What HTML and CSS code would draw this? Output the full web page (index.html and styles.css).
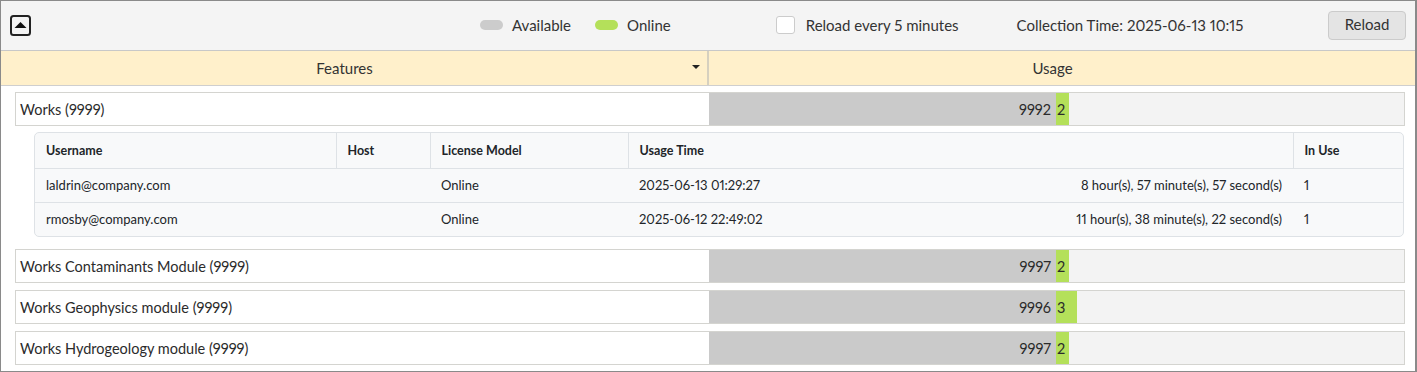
FILE: index.html
```html
<!DOCTYPE html>
<html>
<head>
<meta charset="utf-8">
<link rel="stylesheet" href="styles.css">
</head>
<body>
<div class="app">
  <div class="toolbar">
    <button class="collapse" aria-label="Collapse">
      <svg width="21" height="21" viewBox="0 0 21 21"><rect x="1" y="1" width="19" height="19" rx="2.5" fill="none" stroke="#222" stroke-width="2"/><path d="M4.5 13 L10.5 7 L16.5 13 Z" fill="#111"/></svg>
    </button>
    <div class="legend">
      <span class="pill pill-avail"></span><span class="legend-label">Available</span>
      <span class="pill pill-online"></span><span class="legend-label">Online</span>
    </div>
    <label class="auto"><span class="checkbox"></span><span>Reload every 5 minutes</span></label>
    <span class="time">Collection Time: 2025-06-13 10:15</span>
    <button class="reload">Reload</button>
  </div>
  <div class="head">
    <div class="hcol hcol-features">Features<span class="caret"></span></div>
    <div class="hcol hcol-usage">Usage</div>
  </div>
  <div class="list">
    <div class="feature">
      <div class="fname">Works (9999)</div>
      <div class="usage"><div class="avail" style="width:347px">9992</div><div class="online" style="width:13px">2</div></div>
    </div>
    <div class="details">
      <table>
        <thead>
          <tr><th class="c-user">Username</th><th class="c-host">Host</th><th class="c-model">License Model</th><th class="c-time" colspan="2">Usage Time</th><th class="c-use">In Use</th></tr>
        </thead>
        <tbody>
          <tr><td>laldrin@company.com</td><td></td><td>Online</td><td class="start">2025-06-13 01:29:27</td><td class="dur">8 hour(s), 57 minute(s), 57 second(s)</td><td>1</td></tr>
          <tr><td>rmosby@company.com</td><td></td><td>Online</td><td class="start">2025-06-12 22:49:02</td><td class="dur">11 hour(s), 38 minute(s), 22 second(s)</td><td>1</td></tr>
        </tbody>
      </table>
    </div>
    <div class="feature">
      <div class="fname">Works Contaminants Module (9999)</div>
      <div class="usage"><div class="avail" style="width:347px">9997</div><div class="online" style="width:13px">2</div></div>
    </div>
    <div class="feature">
      <div class="fname">Works Geophysics module (9999)</div>
      <div class="usage"><div class="avail" style="width:347px">9996</div><div class="online" style="width:21px">3</div></div>
    </div>
    <div class="feature">
      <div class="fname">Works Hydrogeology module (9999)</div>
      <div class="usage"><div class="avail" style="width:347px">9997</div><div class="online" style="width:13px">2</div></div>
    </div>
  </div>
</div>
</body>
</html>
```
FILE: styles.css
```css
* { box-sizing: border-box; }
html, body { margin: 0; padding: 0; background: #fff; }
body {
  font-family: Lato, "Noto Sans", sans-serif;
  color: #333;
  font-size: 15px;
  font-variant-numeric: proportional-nums;
}

.app {
  width: 1417px;
  height: 372px;
  border: 1px solid #8a8a8a;
  border-right-width: 2px;
  overflow: hidden;
}

.toolbar {
  height: 50px;
  background: #f4f4f4;
  border-bottom: 1px solid #c8c8c8;
  display: flex;
  align-items: center;
  padding-left: 9px;
}
.collapse {
  width: 21px; height: 21px; padding: 0; margin: 0; border: 0; background: none;
  display: flex;
}
.legend { display: flex; align-items: center; margin-left: 449px; padding-bottom: 2px; }
.pill { width: 23px; height: 10px; border-radius: 5px; display: inline-block; }
.pill-avail { background: #cccccc; }
.pill-online { background: #b4e05a; margin-left: 24px; }
.legend-label { margin-left: 9px; }
.auto { display: flex; align-items: center; margin-left: 105px; padding-bottom: 2px; }
.checkbox { width: 19px; height: 18px; background: #fff; border: 1px solid #ccc; border-radius: 3px; margin-right: 11px; }
.time { margin-left: 58px; padding-bottom: 2px; }
.reload {
  margin-left: auto; margin-right: 9px;
  width: 78px; height: 29px;
  background: #e4e4e4; border: 1px solid #cbcbcb; border-radius: 4px;
  font: inherit; color: #333; padding: 0 0 3px;
}

.head {
  display: flex;
  height: 35px;
  background: #fff0cb;
  border-bottom: 1px solid #cfcfcf;
}
.hcol { display: flex; align-items: center; justify-content: center; padding-right: 19px; }
.hcol-features { width: 708px; border-right: 2px solid #d6d0bf; position: relative; }
.hcol-usage { flex: 1; }
.caret {
  position: absolute; right: 7px; top: 14px;
  width: 0; height: 0;
  border-left: 4px solid transparent; border-right: 4px solid transparent;
  border-top: 4px solid #222;
}

.list { padding: 6px 10px 0 14px; }
.feature {
  display: flex;
  height: 34px;
  border: 1px solid #d4d4d0;
  margin-bottom: 7px;
  font-size: 14.5px;
  color: #2b2b2b;
}
.fname { width: 693px; background: #fff; display: flex; align-items: center; padding-left: 4px; padding-top: 1px; }
.usage { flex: 1; display: flex; background: #f3f3f3; }
.avail { background: #cacaca; display: flex; align-items: center; justify-content: flex-end; padding-right: 5px; padding-top: 1px; }
.online { background: #b4e05a; display: flex; align-items: center; padding-left: 1px; padding-top: 1px; }

.details {
  margin: -1px 1px 12px 19px;
  border: 1px solid #dee2e6;
  border-radius: 5px;
  background: #f8f9fa;
  overflow: hidden;
}
table { width: 100%; border-collapse: collapse; font-size: 13px; color: #212529; }
th { font-size: 12.5px; font-weight: 700; text-align: left; height: 35px; padding: 0 11px; border-bottom: 1px solid #dee2e6; border-right: 1px solid #dee2e6; }
th:last-child { border-right: 0; }
td { height: 34px; padding: 0 11px 1px; }
tbody tr:first-child td { border-bottom: 1px solid #dee2e6; }
.c-user { width: 301px; }
.c-host { width: 94px; }
.c-model { width: 198px; }
.c-use { width: 110px; }
td.start { padding-right: 0; }
td.dur { text-align: right; }
```
